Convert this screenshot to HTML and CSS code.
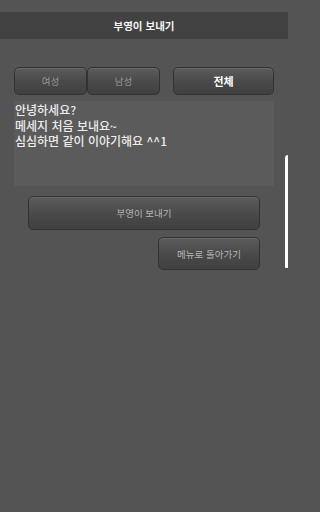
FILE: index.html
```html
<!DOCTYPE html>
<html lang="ko">
<head>
<meta charset="utf-8">
<link rel="stylesheet" href="styles.css">
</head>
<body>
<div class="status"></div>
<div class="titlebar">부영이 보내기</div>
<div class="content">
  <div class="tabs">
    <div class="seg">
      <div class="btn tab dim">여성</div>
      <div class="btn tab dim">남성</div>
    </div>
    <div class="btn tab all">전체</div>
  </div>
  <div class="msg">안녕하세요?<br>메세지 처음 보내요~<br>심심하면 같이 이야기해요 ^^1</div>
  <div class="btn send">부영이 보내기</div>
  <div class="row-end">
    <div class="btn back">메뉴로 돌아가기</div>
  </div>
</div>
<div class="edge"></div>
</body>
</html>
```
FILE: styles.css
```css
html {
  background: #545454;
}
body {
  margin: 0;
  padding: 0;
  width: 288px;
  height: 512px;
  background: #545454;
  font-family: "Noto Sans CJK KR", "Noto Sans", sans-serif;
  overflow: hidden;
  position: relative;
}
.status { height: 12px; }
.titlebar {
  height: 27px;
  background: #424242;
  color: #f4f4f4;
  font-size: 10.5px;
  font-weight: 700;
  display: flex;
  align-items: center;
  justify-content: center;
}
.content {
  padding: 28px 14px 0 14px;
  display: flex;
  flex-direction: column;
}
.btn {
  box-sizing: border-box;
  border: 1px solid #323232;
  border-radius: 5px;
  background: linear-gradient(#5c5c5c, #4a4a4a 50%, #404040);
  box-shadow: inset 0 1px 0 rgba(255,255,255,0.08);
  display: flex;
  align-items: center;
  justify-content: center;
  font-size: 9.5px;
  color: #b4b4b4;
}
.tabs {
  display: flex;
  justify-content: space-between;
  height: 28px;
}
.seg { display: flex; }
.tab { width: 73px; height: 28px; }
.tab.dim { color: #999999; }
.tab.all {
  width: 101px;
  color: #ffffff;
  font-weight: 700;
  font-size: 11px;
}
.msg {
  margin-top: 6px;
  height: 85px;
  box-sizing: border-box;
  background: #5b5b5b;
  color: #ececec;
  font-size: 12px;
  font-weight: 500;
  line-height: 15.5px;
  padding: 1px 1px;
}
.send {
  margin: 10px 14px 0 14px;
  height: 34px;
}
.row-end {
  display: flex;
  justify-content: flex-end;
  margin: 7px 14px 0 0;
}
.back {
  width: 102px;
  height: 33px;
}
.edge {
  position: absolute;
  right: 0;
  top: 155px;
  width: 3px;
  height: 113px;
  background: #ffffff;
  border-top-left-radius: 3px;
  border-bottom-left-radius: 1px;
}
```
